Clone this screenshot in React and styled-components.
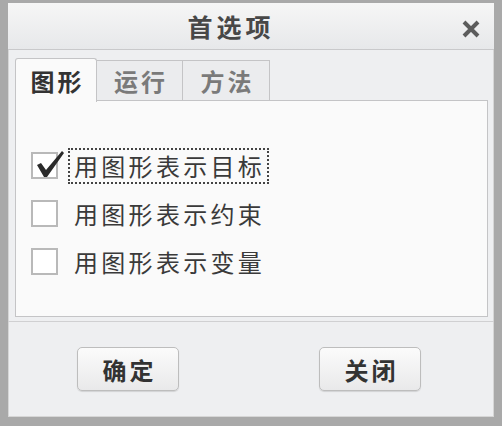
import React from "react";
import styled, { createGlobalStyle } from "styled-components";

const Global = createGlobalStyle`
  html, body { margin: 0; padding: 0; background: #a8a8a8; }
  body { font-family: "Noto Sans CJK SC", "Noto Sans", sans-serif; }
  * { box-sizing: border-box; }
`;

const Window = styled.div`
  width: 502px;
  height: 426px;
  display: flex;
  flex-direction: column;
  background: #eeeff1;
  border-style: solid;
  border-color: #a9a9a9;
  border-width: 3px 8px 9px 8px;
  box-shadow: inset 1px 0 0 #d6d6d6, inset -1px 0 0 #d6d6d6, inset 0 -1px 0 #d6d6d6;
`;

const TitleBar = styled.div`
  height: 47px;
  flex: none;
  position: relative;
  display: flex;
  align-items: center;
  justify-content: center;
  background: linear-gradient(#f6f6f6, #e7e8ea);
  border-bottom: 1px solid #c9c9cb;
`;

const Title = styled.div`
  font-size: 25px;
  font-weight: 700;
  color: #474747;
  letter-spacing: 4px;
  margin-left: -40px;
  line-height: 1;
`;

const Close = styled.div`
  position: absolute;
  right: 14px;
  top: 16px;
  width: 18px;
  height: 18px;
`;

const Body = styled.div`
  flex: none;
  padding: 8px 6px 0 7px;
`;

const Tabs = styled.div`
  display: flex;
  height: 43px;
  position: relative;
  z-index: 1;
`;

const Tab = styled.div`
  width: ${(p) => p.$w}px;
  display: flex;
  align-items: center;
  justify-content: center;
  font-size: 24px;
  font-weight: 700;
  letter-spacing: 3px;
  padding-left: 3px;
  color: ${(p) => (p.$active ? "#333" : "#7a7a7a")};
  background: ${(p) => (p.$active ? "#fafafa" : "#ebecee")};
  border: 1px solid #c4c4c6;
  border-bottom: ${(p) => (p.$active ? "none" : "1px solid #c4c4c6")};
  border-left: ${(p) => (p.$first ? "1px solid #c4c4c6" : "none")};
  border-radius: ${(p) => (p.$active ? "3px 3px 0 0" : "0")};
  margin-top: ${(p) => (p.$active ? 0 : 2)}px;
  height: ${(p) => (p.$active ? 44 : 41)}px;
`;

const Panel = styled.div`
  height: 217px;
  margin-top: -1px;
  background: #fafafa;
  border: 1px solid #c4c4c6;
  padding: 49px 0 0 15px;
  display: flex;
  flex-direction: column;
  gap: 17px;
`;

const Row = styled.div`
  display: flex;
  align-items: center;
  height: 31px;
`;

const Box = styled.div`
  width: 27px;
  height: 27px;
  flex: none;
  position: relative;
  background: #fff;
  border: 2px solid #b9b9b9;
`;

const Check = styled.svg`
  position: absolute;
  left: 1px;
  top: -6px;
  overflow: visible;
`;

const Label = styled.div`
  margin-left: 12px;
  padding: 1px 2px 1px 4px;
  font-size: 24px;
  letter-spacing: 3.3px;
  color: #3a3a3a;
  line-height: 30px;
  outline: ${(p) => (p.$focus ? "2px dotted #444" : "none")};
  outline-offset: 0;
`;

const Footer = styled.div`
  flex: 1;
  margin-top: 4px;
  border-top: 1px solid #d0d0d2;
  display: flex;
  justify-content: space-between;
  align-items: flex-start;
  padding: 25px 73px 0 69px;
`;

const Button = styled.div`
  width: 102px;
  height: 44px;
  border: 1px solid #bdbdbd;
  border-radius: 5px;
  background: linear-gradient(#fbfbfb, #e9e9ea);
  box-shadow: 0 1px 1px rgba(0, 0, 0, 0.12);
  display: flex;
  align-items: center;
  justify-content: center;
  font-size: 24px;
  font-weight: 700;
  letter-spacing: 3px;
  padding-left: 3px;
  color: #333;
`;

const items = [
  { text: "用图形表示目标", checked: true },
  { text: "用图形表示约束", checked: false },
  { text: "用图形表示变量", checked: false },
];

export default function App() {
  return (
    <>
      <Global />
      <Window>
        <TitleBar>
          <Title>首选项</Title>
          <Close>
            <svg width="18" height="18" viewBox="0 0 18 18">
              <path d="M2 2 L16 16 M16 2 L2 16" stroke="#5c5c5c" strokeWidth="4" strokeLinecap="butt" />
            </svg>
          </Close>
        </TitleBar>
        <Body>
          <Tabs>
            <Tab $w={82} $active $first>图形</Tab>
            <Tab $w={86}>运行</Tab>
            <Tab $w={87}>方法</Tab>
          </Tabs>
          <Panel>
            {items.map((it, i) => (
              <Row key={i}>
                <Box>
                  {it.checked && (
                    <Check width="32" height="32" viewBox="0 0 32 32">
                      <path
                        d="M3 17 L7 15 L12 22 L28 3 L30 5 L13 29 L10 29 Z"
                        fill="#2a2a2a"
                      />
                    </Check>
                  )}
                </Box>
                <Label $focus={i === 0}>{it.text}</Label>
              </Row>
            ))}
          </Panel>
        </Body>
        <Footer>
          <Button>确定</Button>
          <Button>关闭</Button>
        </Footer>
      </Window>
    </>
  );
}
